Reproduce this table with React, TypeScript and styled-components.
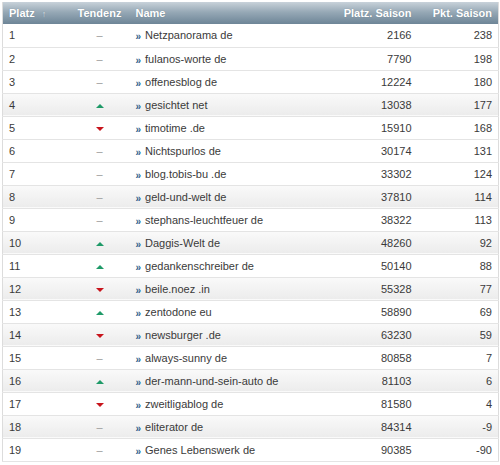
import React from "react";
import styled, { createGlobalStyle } from "styled-components";

const Global = createGlobalStyle`
  html, body { margin: 0; padding: 0; background: #fff; }
  body { font-family: "Liberation Sans", Arial, sans-serif; }
  * { box-sizing: border-box; }
`;

const Wrap = styled.div`
  padding: 2px 2px 0 2px;
  width: 500px;
`;

const Table = styled.table`
  width: 496px;
  border-collapse: collapse;
  table-layout: fixed;
  font-size: 11px;
  color: #3a3a3a;
  border: 1px solid #dcdcdc;
  border-top: none;
`;

const HeadRow = styled.tr`
  height: 22px;
  background: linear-gradient(to bottom, #c8d2da 0%, #97a9b6 45%, #6d8597 100%);
`;

type Align = "left" | "center" | "right";

const Th = styled.th<{ $align: Align; $w: number; $pl?: number }>`
  width: ${(p) => p.$w}px;
  text-align: ${(p) => p.$align};
  color: #fff;
  font-weight: bold;
  font-size: 11px;
  padding: 0 6px 0 ${(p) => p.$pl ?? 6}px;
  white-space: nowrap;
  text-shadow: 0 0 1px rgba(60, 80, 95, 0.4);
`;

const SortArrow = styled.span`
  display: inline-block;
  margin-left: 7px;
  font-size: 9px;
  color: #e3e9ee;
  opacity: 0.85;
`;

const Row = styled.tr<{ $shade: boolean }>`
  height: 23px;
  border-bottom: 1px solid #e4e4e4;
  background: ${(p) =>
    p.$shade ? "linear-gradient(to bottom, #fafafa 0%, #ececec 100%)" : "#fff"};
`;

const Td = styled.td<{ $align: Align; $pl?: number }>`
  text-align: ${(p) => p.$align};
  padding: 0 6px 0 ${(p) => p.$pl ?? 6}px;
  white-space: nowrap;
  overflow: hidden;
`;

const Dash = styled.span`
  color: #9a9a9a;
`;

const Up = styled.span`
  display: inline-block;
  width: 0;
  height: 0;
  border-left: 4px solid transparent;
  border-right: 4px solid transparent;
  border-bottom: 4px solid #1f9a68;
  vertical-align: middle;
`;

const Down = styled.span`
  display: inline-block;
  width: 0;
  height: 0;
  border-left: 4px solid transparent;
  border-right: 4px solid transparent;
  border-top: 4px solid #c8141c;
  vertical-align: middle;
`;

const Chevron = styled.span`
  display: inline-block;
  color: #2f5f8a;
  font-weight: bold;
  font-size: 10px;
  margin-right: 4px;
  transform: translateY(1px);
`;

type T = "n" | "u" | "d";

const data: [number, T, string, number, number][] = [
  [1, "n", "Netzpanorama de", 2166, 238],
  [2, "n", "fulanos-worte de", 7790, 198],
  [3, "n", "offenesblog de", 12224, 180],
  [4, "u", "gesichtet net", 13038, 177],
  [5, "d", "timotime .de", 15910, 168],
  [6, "n", "Nichtspurlos de", 30174, 131],
  [7, "n", "blog.tobis-bu .de", 33302, 124],
  [8, "n", "geld-und-welt de", 37810, 114],
  [9, "n", "stephans-leuchtfeuer de", 38322, 113],
  [10, "u", "Daggis-Welt de", 48260, 92],
  [11, "u", "gedankenschreiber de", 50140, 88],
  [12, "d", "beile.noez .in", 55328, 77],
  [13, "u", "zentodone eu", 58890, 69],
  [14, "d", "newsburger .de", 63230, 59],
  [15, "n", "always-sunny de", 80858, 7],
  [16, "u", "der-mann-und-sein-auto de", 81103, 6],
  [17, "d", "zweitligablog de", 81580, 4],
  [18, "n", "eliterator de", 84314, -9],
  [19, "n", "Genes Lebenswerk de", 90385, -90],
];

const Trend = ({ t }: { t: T }) =>
  t === "u" ? <Up /> : t === "d" ? <Down /> : <Dash>–</Dash>;

export default function App() {
  return (
    <Wrap>
      <Global />
      <Table>
        <thead>
          <HeadRow>
            <Th $align="left" $w={64}>
              Platz<SortArrow>↑</SortArrow>
            </Th>
            <Th $align="center" $w={66}>Tendenz</Th>
            <Th $align="left" $w={202} $pl={3}>Name</Th>
            <Th $align="right" $w={83}>Platz. Saison</Th>
            <Th $align="right" $w={81}>Pkt. Saison</Th>
          </HeadRow>
        </thead>
        <tbody>
          {data.map(([pl, t, name, ps, pk]) => (
            <Row key={pl} $shade={pl % 2 === 0 && pl !== 2 && pl !== 6}>
              <Td $align="left">{pl}</Td>
              <Td $align="center">
                <Trend t={t} />
              </Td>
              <Td $align="left" $pl={3}>
                <Chevron>»</Chevron>
                {name}
              </Td>
              <Td $align="right">{ps}</Td>
              <Td $align="right">{pk}</Td>
            </Row>
          ))}
        </tbody>
      </Table>
    </Wrap>
  );
}
